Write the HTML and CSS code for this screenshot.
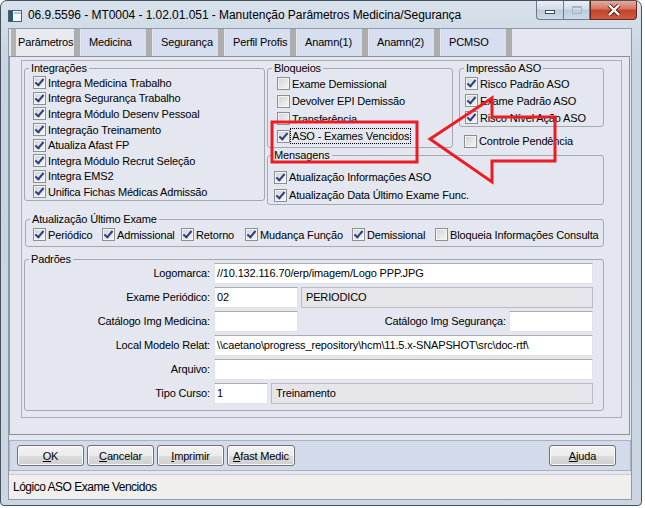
FILE: index.html
```html
<!DOCTYPE html>
<html lang="pt-BR">
<head>
    <meta charset="UTF-8">
    <title>Manutenção Parâmetros Medicina/Segurança</title>
    <link rel="stylesheet" href="styles.css">
</head>
<body>

<div class="window">
    <div class="titlebar">
        <svg class="app-icon" width="14" height="12" viewBox="0 0 14 12">
            <rect x="0.5" y="0.5" width="13" height="11" fill="#f4f6f8" stroke="#55606b"/>
            <rect x="1" y="1" width="4" height="10" fill="#1f5f78"/>
            <rect x="6" y="2" width="7" height="2" fill="#b9c3cc"/>
        </svg>
        <span class="title">06.9.5596 - MT0004 - 1.02.01.051 - Manutenção Parâmetros Medicina/Segurança</span>
        <div class="controls">
            <span class="ctl min"><i></i></span>
            <span class="ctl max"><i></i></span>
            <span class="ctl close">
                <svg width="14" height="12" viewBox="0 0 14 12">
                    <path d="M2 1 L12 11 M12 1 L2 11" stroke="#5b1d14" stroke-width="4.2"/>
                    <path d="M2 1 L12 11 M12 1 L2 11" stroke="#fff" stroke-width="2.4"/>
                </svg>
            </span>
        </div>
    </div>

    <div class="client">
        <div class="tabs">
            <span class="tab active">Parâmetros</span>
            <span class="tab">Medicina</span>
            <span class="tab">Segurança</span>
            <span class="tab">Perfil Profis</span>
            <span class="tab">Anamn(1)</span>
            <span class="tab">Anamn(2)</span>
            <span class="tab">PCMSO</span>
        </div>

        <div class="tabpanel">
            <div class="frame">
                <div class="top">
                    <fieldset class="box integ">
                        <legend>Integrações</legend>
                        <label class="cb on"><span class="check"></span>Integra Medicina Trabalho</label>
                        <label class="cb on"><span class="check"></span>Integra Segurança Trabalho</label>
                        <label class="cb on"><span class="check"></span>Integra Módulo Desenv Pessoal</label>
                        <label class="cb on"><span class="check"></span>Integração Treinamento</label>
                        <label class="cb on"><span class="check"></span>Atualiza Afast FP</label>
                        <label class="cb on"><span class="check"></span>Integra Módulo Recrut Seleção</label>
                        <label class="cb on"><span class="check"></span>Integra EMS2</label>
                        <label class="cb on"><span class="check"></span>Unifica Fichas Médicas Admissão</label>
                    </fieldset>

                    <div class="right">
                        <div class="right-top">
                            <fieldset class="box bloq">
                                <legend>Bloqueios</legend>
                                <label class="cb"><span class="check"></span>Exame Demissional</label>
                                <label class="cb"><span class="check"></span>Devolver EPI Demissão</label>
                                <label class="cb"><span class="check"></span>Transferência</label>
                                <label class="cb on"><span class="check"></span><span class="focus">ASO - Exames Vencidos</span></label>
                            </fieldset>
                            <div class="imp-col">
                                <fieldset class="box imp">
                                    <legend>Impressão ASO</legend>
                                    <label class="cb on"><span class="check"></span>Risco Padrão ASO</label>
                                    <label class="cb on"><span class="check"></span>Exame Padrão ASO</label>
                                    <label class="cb on"><span class="check"></span>Risco Nível Ação ASO</label>
                                </fieldset>
                                <label class="cb pend"><span class="check"></span>Controle Pendência</label>
                            </div>
                        </div>
                        <fieldset class="box msg">
                            <legend>Mensagens</legend>
                            <label class="cb on"><span class="check"></span>Atualização Informações ASO</label>
                            <label class="cb on"><span class="check"></span>Atualização Data Último Exame Func.</label>
                        </fieldset>
                    </div>
                </div>

                <fieldset class="box atual">
                    <legend>Atualização Último Exame</legend>
                    <div class="atual-row">
                        <label class="cb on"><span class="check"></span>Periódico</label>
                        <label class="cb on"><span class="check"></span>Admissional</label>
                        <label class="cb on"><span class="check"></span>Retorno</label>
                        <label class="cb on"><span class="check"></span>Mudança Função</label>
                        <label class="cb on"><span class="check"></span>Demissional</label>
                        <label class="cb"><span class="check"></span>Bloqueia Informações Consulta</label>
                    </div>
                </fieldset>

                <fieldset class="box padroes">
                    <legend>Padrões</legend>
                    <div class="form">
                        <span class="lbl">Logomarca:</span>
                        <div class="fields"><span class="field">//10.132.116.70/erp/imagem/Logo PPP.JPG</span></div>

                        <span class="lbl">Exame Periódico:</span>
                        <div class="fields">
                            <span class="field code">02</span>
                            <span class="field ro">PERIODICO</span>
                        </div>

                        <span class="lbl">Catálogo Img Medicina:</span>
                        <div class="fields">
                            <span class="field code"></span>
                            <span class="lbl inner">Catálogo Img Segurança:</span>
                            <span class="field code"></span>
                        </div>

                        <span class="lbl">Local Modelo Relat:</span>
                        <div class="fields"><span class="field">\\caetano\progress_repository\hcm\11.5.x-SNAPSHOT\src\doc-rtf\</span></div>

                        <span class="lbl">Arquivo:</span>
                        <div class="fields"><span class="field"></span></div>

                        <span class="lbl">Tipo Curso:</span>
                        <div class="fields">
                            <span class="field short">1</span>
                            <span class="field ro">Treinamento</span>
                        </div>
                    </div>
                </fieldset>
            </div>
        </div>

        <div class="buttons">
            <button><u>O</u>K</button>
            <button><u>C</u>ancelar</button>
            <button><u>I</u>mprimir</button>
            <button class="wide"><u>A</u>fast Medic</button>
            <button class="help"><u>A</u>juda</button>
        </div>

        <div class="status">Lógico ASO Exame Vencidos</div>
    </div>

    <!-- anotação em vermelho por cima da tela -->
    <svg class="markup" width="645" height="508" viewBox="0 0 645 508">
        <rect x="272" y="122" width="145" height="40" fill="none" stroke="#ec1c24" stroke-width="3"/>
        <polygon points="430,139 492,98 492,117 555,117 555,161 492,161 492,182" fill="none" stroke="#ec1c24" stroke-width="3" stroke-linejoin="miter"/>
    </svg>
</div>

</body>
</html>
```

FILE: styles.css
```css
* {
    box-sizing: border-box;
}

body {
    margin: 0;
    background: #fff;
    font-family: "Liberation Sans", Arial, sans-serif;
    font-size: 11px;
    letter-spacing: -0.15px;
    color: #000;
}

.window {
    position: relative;
    width: 642px;
    height: 506px;
    border: 1px solid #47525e;
    border-radius: 7px 7px 4px 4px;
    background: linear-gradient(#d9e2ec, #c8d4e1 60px, #cbd6e2);
    padding: 0 9px 5px 7px;
    display: flex;
    flex-direction: column;
}

/* barra de titulo */
.titlebar {
    height: 29px;
    display: flex;
    align-items: flex-start;
}

.app-icon {
    margin-top: 9px;
}

.title {
    margin-left: 6px;
    margin-top: 7px;
    font-size: 12px;
    letter-spacing: -0.05px;
    white-space: nowrap;
}

.controls {
    margin-left: auto;
    margin-right: -5px;
    display: flex;
}

.ctl {
    height: 19px;
    display: flex;
    align-items: center;
    justify-content: center;
    border: 1px solid #6b7a8c;
    border-top: none;
}

.ctl.min,
.ctl.max {
    width: 27px;
    background: linear-gradient(#e8eef5, #d2dde9 45%, #bccbdc 50%, #cbd8e6);
}

.ctl.min {
    border-radius: 0 0 0 4px;
    border-right: none;
}

.ctl.min i {
    display: block;
    width: 10px;
    height: 4px;
    margin-top: 4px;
    background: #fff;
    border: 1px solid #3b4b5e;
}

.ctl.max i {
    display: block;
    width: 10px;
    height: 8px;
    border: 1px solid #a7b4c3;
    border-top-width: 2px;
}

.ctl.close {
    width: 47px;
    border-radius: 0 0 4px 0;
    background: linear-gradient(#e7a99a, #d37560 45%, #c2432c 50%, #d05a3e);
    border-color: #5f2a22;
}

/* area do programa */
.client {
    flex: 1;
    display: flex;
    flex-direction: column;
    background: #e4e7ef;
    border: 1px solid #8f9aa8;
}

.tabs {
    display: flex;
    height: 27px;
    padding-left: 2px;
}

.tab {
    width: 71px;
    margin-right: 1px;
    padding-left: 8px;
    line-height: 27px;
    background: #d6def0;
    border-right: 6px solid #adadad;
    white-space: nowrap;
}

.tab.active {
    width: 69px;
    padding-left: 2px;
    background: #e9eaef;
    border-left: 5px solid #b3b3b3;
}

.tabpanel {
    height: 379px;
    margin-right: 1px;
    border: 1px solid #8b909a;
    padding: 3px 7px 0 11px;
}

.frame {
    height: 358px;
    border: 1px solid #a9aeb7;
    padding: 1px 0 0 2px;
}

/* group boxes */
.box {
    margin: 0;
    padding: 0 0 0 4px;
    border: 1px solid #a3a8b1;
    border-radius: 3px;
    min-width: 0;
}

.box legend {
    padding: 0 2px;
    line-height: 13px;
}

.top {
    display: grid;
    grid-template-columns: 241px 337px;
    column-gap: 2px;
    align-items: start;
}

.right-top {
    display: grid;
    grid-template-columns: 186px 145px;
    column-gap: 6px;
    align-items: start;
}

/* checkbox */
.cb {
    display: flex;
    align-items: center;
    gap: 2px;
    white-space: nowrap;
}

.check {
    position: relative;
    width: 13px;
    height: 13px;
    flex: none;
    border: 1px solid #8e8f8f;
    background: linear-gradient(135deg, #cfd2d7, #f6f6f6);
    box-shadow: inset 0 0 0 1px #f4f4f4;
}

.cb.on .check::after {
    content: "";
    position: absolute;
    left: 3px;
    top: 0;
    width: 3px;
    height: 7px;
    border: solid #2c3f86;
    border-width: 0 2px 2px 0;
    transform: rotate(40deg);
}

.integ .cb {
    height: 15.6px;
    padding-left: 4px;
}

.bloq {
    padding-bottom: 2px;
}

.bloq .cb {
    height: 17.5px;
    padding-left: 5px;
}

.focus {
    outline: 1px dotted #000;
    outline-offset: 1px;
}

.imp .cb {
    height: 17px;
    padding-left: 1px;
}

.cb.pend {
    height: 16px;
    margin-top: 6px;
    padding-left: 5px;
}

.msg {
    padding-top: 6px;
}

.msg .cb {
    height: 18px;
    padding-left: 2px;
}

.atual {
    width: 579px;
    margin: 8px 0 0 1px;
    padding-bottom: 3px;
}

.atual-row {
    display: grid;
    grid-template-columns: 69px 79px 64px 107px 83px auto;
    padding-left: 3px;
}

.atual .cb {
    height: 17px;
}

/* padroes */
.padroes {
    width: 580px;
    margin-top: 6px;
    padding: 0 10px 6px 4px;
}

.form {
    margin-top: -3px;
    display: grid;
    grid-template-columns: 181px 379px;
    column-gap: 4px;
    row-gap: 3px;
}

.lbl {
    text-align: right;
    line-height: 21px;
    white-space: nowrap;
}

.fields {
    display: flex;
    gap: 3px;
}

.field {
    flex: 1;
    height: 21px;
    line-height: 19px;
    padding: 0 2px;
    background: #fff;
    border: 1px solid #e2e3ea;
    border-top-color: #abadb3;
    white-space: nowrap;
    overflow: hidden;
}

.field.code {
    flex: none;
    width: 84px;
}

.field.short {
    flex: none;
    width: 54px;
}

.field.ro {
    padding-left: 4px;
    background: #e6e6ea;
    border-color: #b9bcc3;
}

.lbl.inner {
    flex: 1;
}

/* botoes */
.buttons {
    height: 31px;
    margin-top: 5px;
    display: flex;
    align-items: center;
    gap: 3px;
    padding: 0 14px 0 7px;
    background: #d3dbea;
    border: 1px solid #a8b2c3;
}

button {
    width: 67px;
    height: 21px;
    padding: 0;
    font-family: inherit;
    font-size: 11px;
    letter-spacing: -0.15px;
    color: #000;
    border: 1px solid #707070;
    border-radius: 3px;
    background: linear-gradient(#f2f2f2, #ebebeb 50%, #dddddd 51%, #cfcfcf);
    box-shadow: inset 0 0 0 1px #fafafa;
}

button.wide {
    width: 68px;
}

button.help {
    margin-left: auto;
}

.status {
    flex: 1;
    margin-top: 3px;
    padding-left: 4px;
    line-height: 24px;
    font-size: 12px;
    letter-spacing: -0.5px;
    background: #f0efee;
    border-top: 1px solid #c9ccd2;
}

.markup {
    position: absolute;
    left: -1px;
    top: -1px;
    pointer-events: none;
}
```
